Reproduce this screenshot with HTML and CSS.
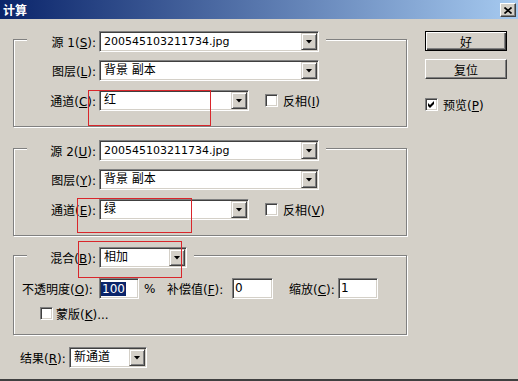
FILE: index.html
```html
<!DOCTYPE html>
<html>
<head>
<meta charset="utf-8">
<title>计算</title>
<link rel="stylesheet" href="styles.css">
</head>
<body>
<div class="window">
  <div class="titlebar">
    <span class="title">计算</span>
    <span class="close"><svg width="8" height="7" viewBox="0 0 8 7"><path d="M0.5 0.5 L7.5 6.5 M7.5 0.5 L0.5 6.5" stroke="#000" stroke-width="1.7"/></svg></span>
  </div>
  <div class="main">
    <div class="left">
      <div class="group">
        <div class="row first">
          <span class="lbl">源 1(<u>S</u>):</span>
          <div class="combo w-long"><span class="val fname">200545103211734.jpg</span><span class="drop"></span></div>
        </div>
        <div class="row r2">
          <span class="lbl">图层(<u>L</u>):</span>
          <div class="combo w-long"><span class="val">背景 副本</span><span class="drop"></span></div>
        </div>
        <div class="row r3">
          <span class="lbl">通道(<u>C</u>):</span>
          <div class="combo w-mid"><span class="val">红</span><span class="drop"></span></div>
          <span class="check-item"><span class="cb"></span><span class="cb-text">反相(<u>I</u>)</span></span>
        </div>
      </div>
      <div class="group">
        <div class="row first">
          <span class="lbl">源 2(<u>U</u>):</span>
          <div class="combo w-long"><span class="val fname">200545103211734.jpg</span><span class="drop"></span></div>
        </div>
        <div class="row r2">
          <span class="lbl">图层(<u>Y</u>):</span>
          <div class="combo w-long"><span class="val">背景 副本</span><span class="drop"></span></div>
        </div>
        <div class="row r3">
          <span class="lbl">通道(<u>E</u>):</span>
          <div class="combo w-mid"><span class="val">绿</span><span class="drop"></span></div>
          <span class="check-item"><span class="cb"></span><span class="cb-text">反相(<u>V</u>)</span></span>
        </div>
      </div>
      <div class="group blend">
        <div class="row first">
          <span class="lbl">混合(<u>B</u>):</span>
          <div class="combo w-short"><span class="val">相加</span><span class="drop"></span></div>
        </div>
        <div class="row opts">
          <span class="cell c-opacity">不透明度(<u>O</u>):</span>
          <span class="field w40"><span class="sel">100</span></span>
          <span class="cell c-pct">%</span>
          <span class="cell c-offset">补偿值(<u>F</u>):</span>
          <span class="field w41">0</span>
          <span class="cell c-gap"></span>
          <span class="cell c-scale">缩放(<u>C</u>):</span>
          <span class="field w40">1</span>
        </div>
        <div class="row mask">
          <span class="cb"></span><span class="cb-text">蒙版(<u>K</u>)...</span>
        </div>
      </div>
      <div class="result">
        <span class="res-lbl">结果(<u>R</u>):</span>
        <div class="combo w-res"><span class="val">新通道</span><span class="drop"></span></div>
      </div>
    </div>
    <div class="right">
      <div class="btn default">好</div>
      <div class="btn">复位</div>
      <div class="preview">
        <span class="cb"><svg width="7" height="7" viewBox="0 0 7 7"><polygon points="0,2 2,4 6,0 6,3 2,7 0,5" fill="#000"/></svg></span>
        <span class="cb-text">预览(<u>P</u>)</span>
      </div>
    </div>
  </div>
  <div class="mark mark1"></div>
  <div class="mark mark2"></div>
  <div class="mark mark3"></div>
</div>
</body>
</html>
```
FILE: styles.css
```css
* { box-sizing: border-box; }
body {
  margin: 0;
  background: #d4d0c8;
  font-family: "DejaVu Sans", "Noto Sans CJK SC", sans-serif;
  font-size: 12px;
  color: #000;
}
u { text-underline-offset: 1px; }
.window {
  position: relative;
  width: 518px;
  height: 381px;
  display: flex;
  flex-direction: column;
  border-bottom: 2px solid #404040;
  overflow: hidden;
}
.titlebar {
  height: 19px;
  flex: none;
  display: flex;
  align-items: flex-start;
  padding: 0 2px 0 3px;
  background: linear-gradient(to right, #0a246a, #a6caf0);
}
.title {
  color: #fff;
  font-weight: bold;
  font-family: "Noto Sans CJK SC", sans-serif;
  font-size: 12px;
  line-height: 19px;
}
.close {
  margin-left: auto;
  margin-top: 3px;
  width: 16px;
  height: 14px;
  background: #d4d0c8;
  border: 1px solid;
  border-color: #fff #404040 #404040 #fff;
  box-shadow: inset -1px -1px 0 #808080;
  display: flex;
  align-items: center;
  justify-content: center;
}
.main { display: flex; flex: 1; }
.left {
  padding-left: 13px;
  padding-top: 20px;
  display: flex;
  flex-direction: column;
  align-items: flex-start;
}
.right {
  margin-left: 18px;
  padding-top: 12px;
  display: flex;
  flex-direction: column;
  align-items: flex-start;
}
.group {
  width: 394px;
  border: 1px solid #808080;
  box-shadow: 1px 1px 0 #fff, inset 1px 1px 0 #fff;
  display: flex;
  flex-direction: column;
  align-items: flex-start;
  padding-bottom: 15px;
}
.group + .group { margin-top: 21px; }
.group.blend { margin-top: 19px; padding-bottom: 14px; }
.row {
  display: flex;
  align-items: center;
  height: 21px;
  margin-left: 13px;
  white-space: nowrap;
}
.row.first { margin-top: -9px; padding-right: 7px; background: #d4d0c8; }
.row.r2 { margin-top: 8px; }
.row.r3 { margin-top: 9px; }
.lbl { width: 72px; text-align: right; padding-right: 3px; }
.combo {
  display: flex;
  height: 21px;
  background: #fff;
  border: 1px solid;
  border-color: #808080 #fff #fff #808080;
  box-shadow: inset 1px 1px 0 #404040, inset -1px -1px 0 #d4d0c8;
  padding: 1px;
}
.w-long { width: 220px; }
.w-mid { width: 150px; }
.w-short { width: 88px; }
.w-res { width: 78px; }
.val { flex: 1; padding-left: 3px; line-height: 17px; overflow: hidden; white-space: nowrap; }
.fname { font-size: 11px; }
.drop {
  width: 16px;
  height: 17px;
  flex: none;
  background: #d4d0c8;
  border: 1px solid;
  border-color: #d4d0c8 #404040 #404040 #d4d0c8;
  box-shadow: inset 1px 1px 0 #fff, inset -1px -1px 0 #808080;
  display: flex;
  align-items: center;
  justify-content: center;
}
.drop::after {
  content: "";
  width: 7px;
  height: 4px;
  background: #000;
  clip-path: polygon(0 0, 100% 0, 50% 100%);
}
.cb {
  width: 13px;
  height: 13px;
  flex: none;
  background: #fff;
  border: 1px solid;
  border-color: #808080 #fff #fff #808080;
  box-shadow: inset 1px 1px 0 #404040, inset -1px -1px 0 #d4d0c8;
  display: flex;
  align-items: center;
  justify-content: center;
}
.cb-text { margin-left: 5px; }
.check-item { display: flex; align-items: center; margin-left: 16px; }
.row.opts { margin-left: 8px; margin-top: 10px; }
.cell { display: block; }
.c-opacity { width: 77px; }
.c-pct { width: 28px; padding-left: 5px; }
.c-offset { width: 65px; }
.c-gap { width: 16px; }
.c-scale { width: 49px; }
.field {
  height: 21px;
  background: #fff;
  border: 1px solid;
  border-color: #808080 #fff #fff #808080;
  box-shadow: inset 1px 1px 0 #404040, inset -1px -1px 0 #d4d0c8;
  padding: 1px 1px 1px 2px;
  line-height: 17px;
  display: block;
}
.w40 { width: 40px; }
.w41 { width: 41px; }
.sel {
  display: inline-block;
  background: #0a246a;
  color: #fff;
  line-height: 14px;
  padding: 0 1px;
  margin-left: -1px;
  vertical-align: middle;
}
.row.mask { margin-left: 26px; margin-top: 8px; height: 13px; }
.row.mask .cb-text { margin-left: 3px; }
.result {
  margin-left: 7px;
  margin-top: 12px;
  display: flex;
  align-items: center;
}
.res-lbl { width: 49px; white-space: nowrap; }
.btn {
  width: 82px;
  height: 20px;
  display: flex;
  align-items: center;
  justify-content: center;
  border: 1px solid;
  border-color: #fff #404040 #404040 #fff;
  box-shadow: inset -1px -1px 0 #808080;
}
.btn.default {
  border-color: #000;
  box-shadow: inset 1px 1px 0 #fff, inset -1px -1px 0 #404040, inset -2px -2px 0 #808080;
}
.btn + .btn { margin-top: 8px; }
.preview { margin-top: 17px; display: flex; align-items: center; }
.mark { position: absolute; border: 1px solid #d9262b; }
.mark1 { left: 88px; top: 90px; width: 123px; height: 36px; }
.mark2 { left: 77px; top: 198px; width: 115px; height: 35px; }
.mark3 { left: 78px; top: 241px; width: 104px; height: 37px; }
```
